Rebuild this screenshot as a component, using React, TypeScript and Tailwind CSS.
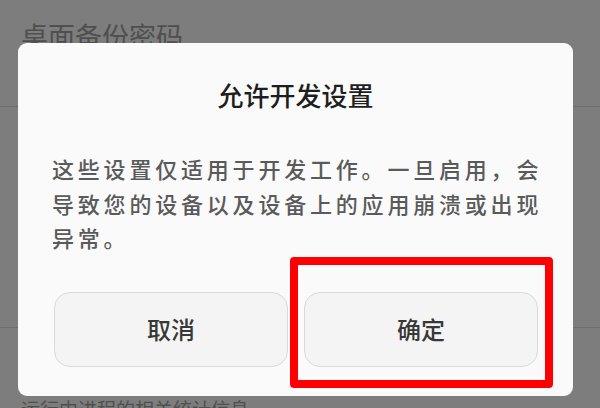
import { ChevronRight } from "lucide-react";

const FONT = { fontFamily: '"Noto Sans CJK SC", "Noto Sans", sans-serif' };

const Row = ({ h, title, chevronTop }: { h: string; title?: string; chevronTop: string }) => (
  <div className={`${h} flex items-start justify-between border-b border-[#6e6e6e] pl-[21px] pr-[22px]`}>
    <div className="flex flex-col">
      {title && <p className="text-[27px] leading-[36px] text-[#4f4f4f] pt-[18px]">{title}</p>}
    </div>
    <ChevronRight className={`${chevronTop} text-[#5a5a5a]`} size={18} strokeWidth={2.5} />
  </div>
);

export default function App() {
  return (
    <div className="relative h-[408px] w-[600px] overflow-hidden bg-[#7d7d7d]" style={FONT}>
      {/* settings list behind the dim */}
      <div className="flex flex-col">
        <Row h="h-[107px]" title="桌面备份密码" chevronTop="mt-[44px]" />
        <Row h="h-[221px]" chevronTop="mt-[46px]" />
        <div className="flex flex-col pl-[21px] pt-[24px]">
          <p className="text-[27px] leading-[36px] text-[#4f4f4f]">进程统计信息</p>
          <p className="text-[19px] leading-[26px] text-[#4f4f4f] mt-[8px]">运行中进程的相关统计信息</p>
        </div>
      </div>

      {/* dialog */}
      <div className="absolute left-[18px] top-[43px] w-[555px] h-[353px] rounded-[9px] bg-[#fafafa] flex flex-col pt-[34px]">
        <h2 className="text-center text-[26px] leading-[36px] text-[#1e1e1e] font-medium">允许开发设置</h2>
        <p className="mt-[38px] pl-[34px] pr-[20px] text-[22px] leading-[34.5px] tracking-[3.8px] font-medium text-[#5a5a5a]">
          这些设置仅适用于开发工作。一旦启用，会导致您的设备以及设备上的应用崩溃或出现异常。
        </p>
        <div className="mt-[37px] flex gap-[16px] pl-[36px] pr-[35px]">
          <button className="h-[75px] flex-1 rounded-[16px] border border-[#dadada] bg-[#f4f4f4] text-[24px] font-medium text-[#383838]">
            取消
          </button>
          <button className="h-[75px] flex-1 rounded-[16px] border border-[#dadada] bg-[#f4f4f4] text-[24px] font-medium text-[#383838]">
            确定
          </button>
        </div>
      </div>

      {/* annotation box */}
      <div className="absolute left-[290px] top-[257px] w-[263px] h-[131px] rounded-[4px] border-[8px] border-[#ff0000]" />
    </div>
  );
}
